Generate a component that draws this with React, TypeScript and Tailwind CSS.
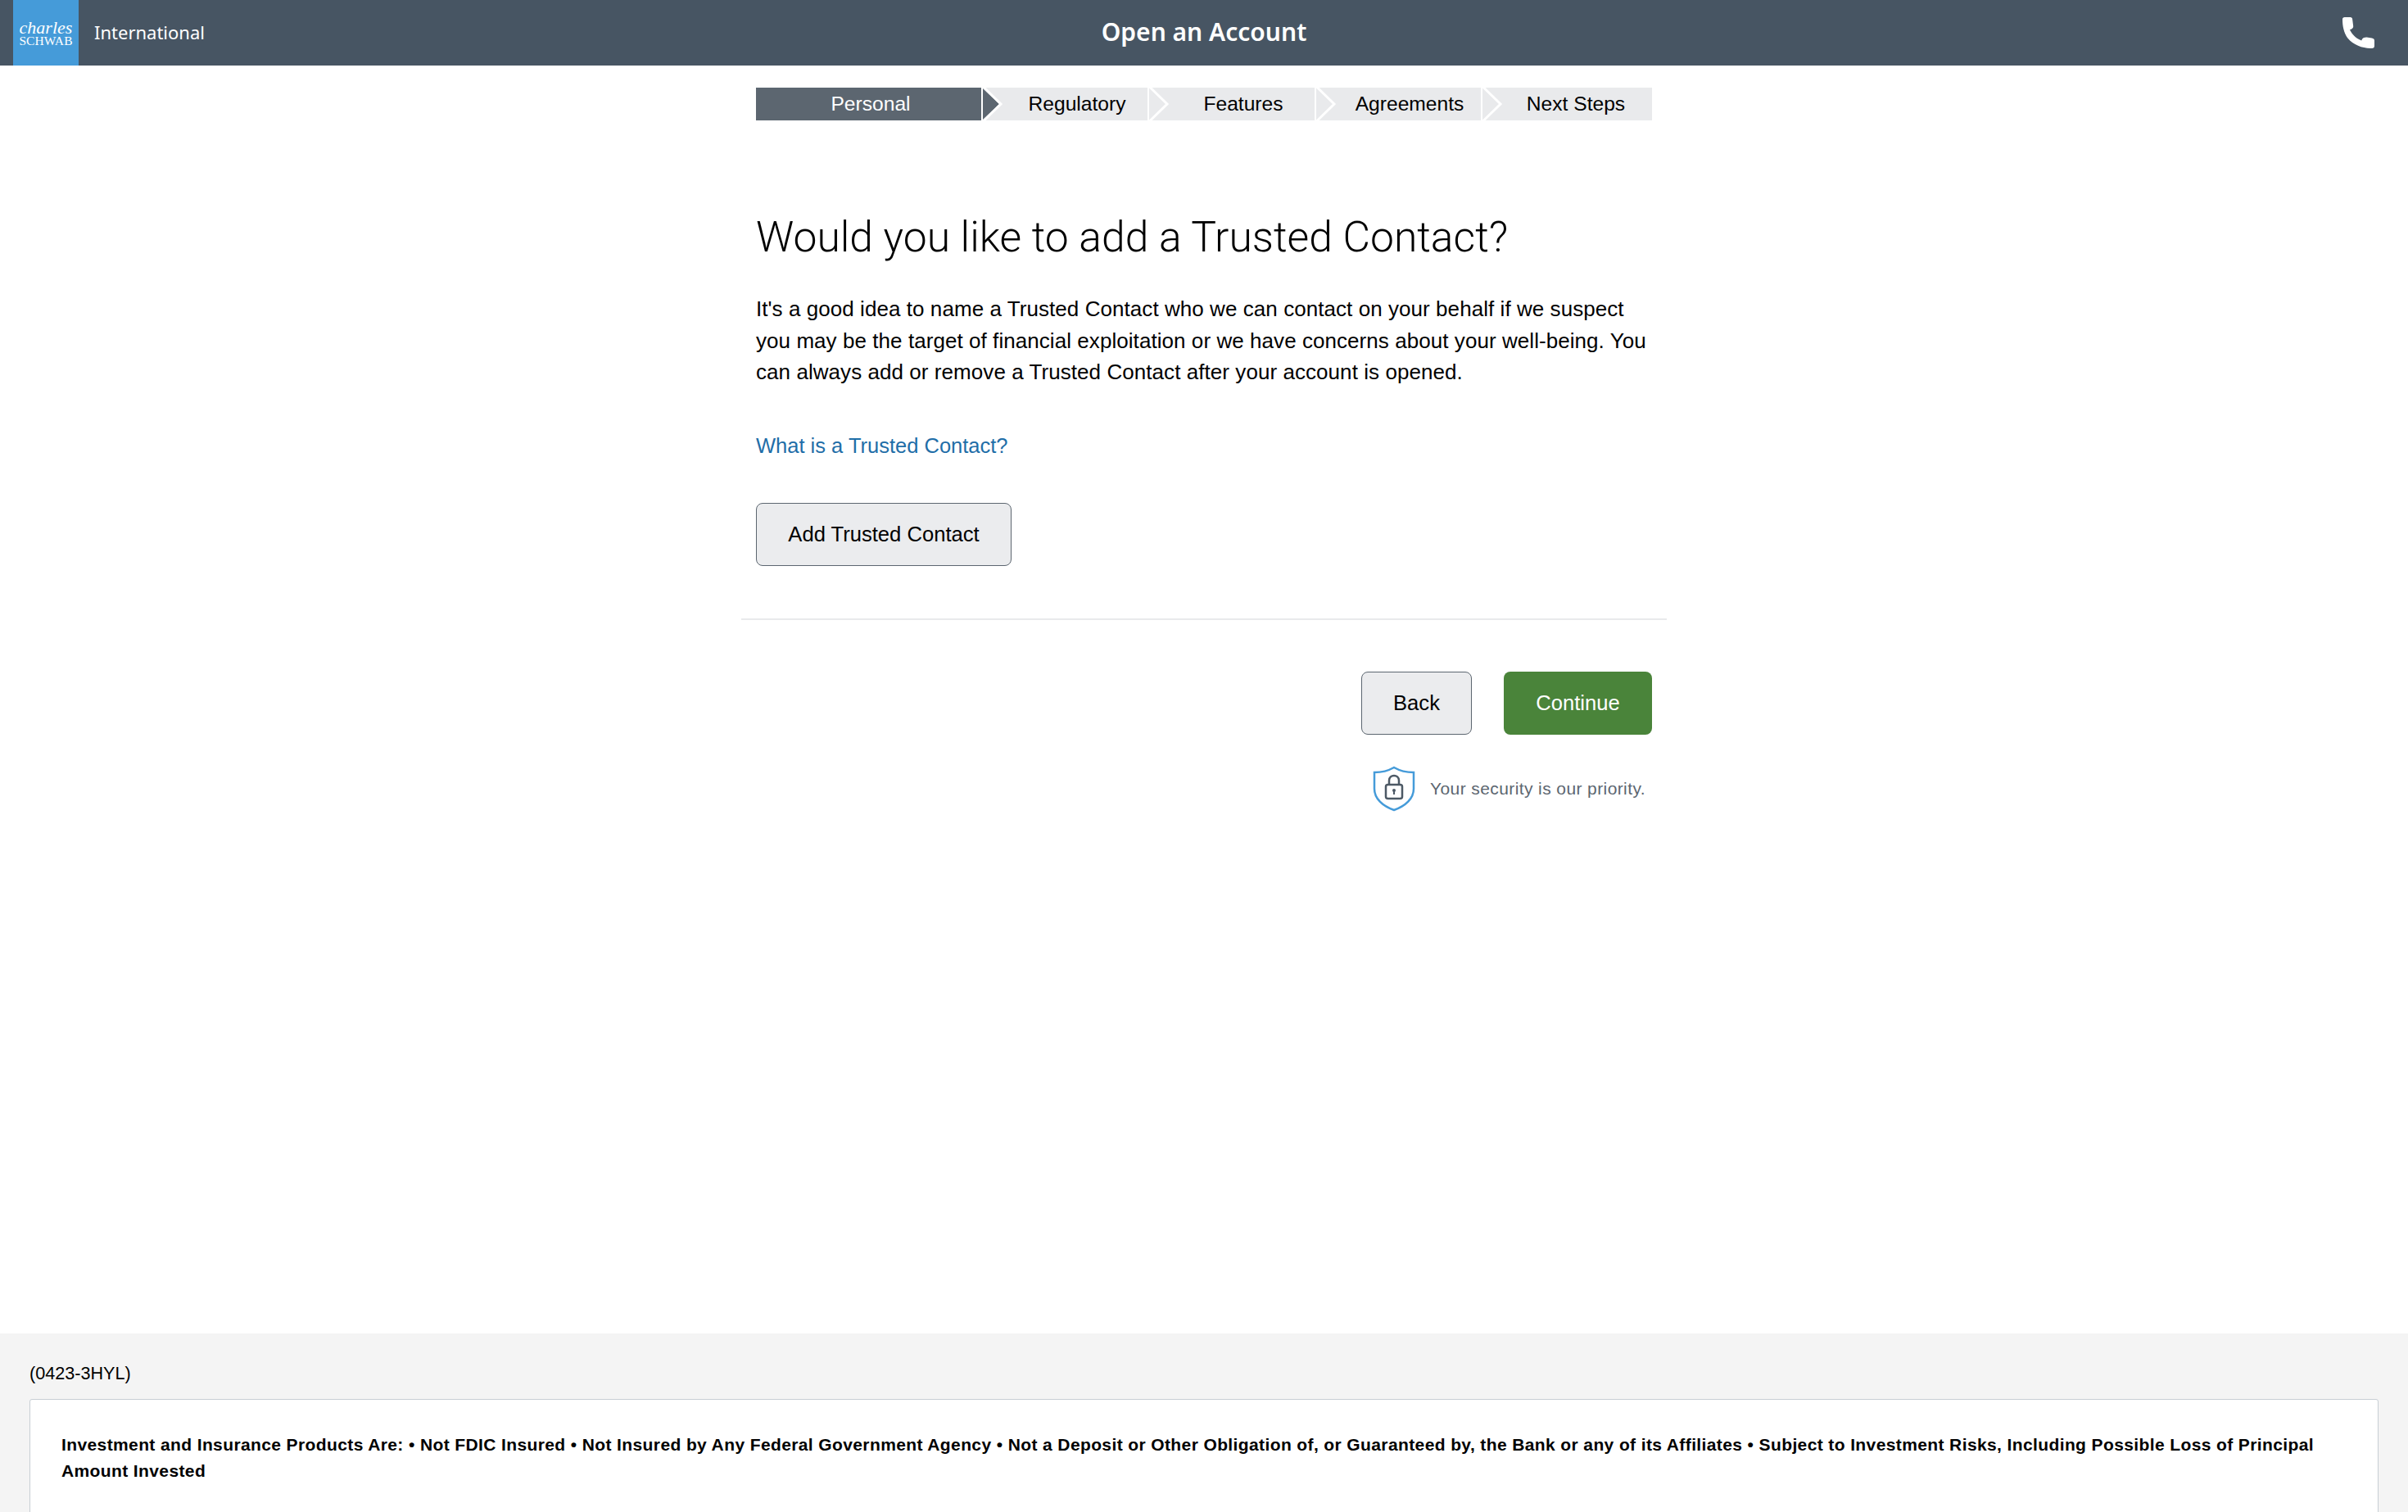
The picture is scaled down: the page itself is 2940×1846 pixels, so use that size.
import React from 'react';

const steps = [
    { label: 'Regulatory', width: 'w-[203px]', pad: 'pl-[31px]' },
    { label: 'Features', width: 'w-[204px]', pad: 'pl-[30px]' },
    { label: 'Agreements', width: 'w-[203px]', pad: 'pl-[29px]' },
    { label: 'Next Steps', width: 'w-[209px]', pad: 'pl-[23px]' },
];

const Chevron: React.FC<{ active?: boolean }> = ({ active }) => (
    <svg className="absolute left-0 top-0" width="30" height="40" viewBox="0 0 30 40" fill="none">
        <rect x="0" y="0" width="2" height="40" fill="#ffffff" />
        {active && <path d="M2 1 L22 20 L2 39 Z" fill="#5c6670" />}
        <path d="M2 -1.5 L24 20 L2 41.5" stroke="#ffffff" strokeWidth="3" />
    </svg>
);

const Btn: React.FC<{ children: React.ReactNode; className: string }> = ({ children, className }) => (
    <button className={`h-[77px] rounded-[8px] text-[25.6px] ${className}`}>{children}</button>
);

export default function App() {
    return (
        <div className="h-[1846px] w-[2940px] overflow-hidden bg-white flex flex-col font-['Liberation_Sans',sans-serif] text-black">
            <header className="relative h-[80px] shrink-0 bg-[#475563] flex items-center pl-[16px] pr-[41px] text-white">
                <div className="w-[80px] h-[80px] bg-[#459bd9] flex flex-col items-center justify-center font-['Liberation_Serif',serif] leading-none">
                    <span className="italic text-[22px] leading-[19px]">charles</span>
                    <span className="text-[15.5px] leading-[13px] tracking-[0.1px]">SCHWAB</span>
                </div>
                <span className="ml-[19px] -mt-[2px] text-[22px] font-['Noto_Sans',sans-serif]">International</span>
                <span className="absolute left-0 right-0 -top-px h-[80px] leading-[80px] text-center text-[30px] font-semibold font-['Noto_Sans',sans-serif]">Open an Account</span>
                <svg className="ml-auto" width="39" height="38" viewBox="2 0 37 38.6" preserveAspectRatio="none" fill="#ffffff">
                    <path d="M2 2.5 C2 1 3 0 4.5 0 L11 0 C12.5 0 13.5 1 13.5 2.5 L14.5 11 C14.8 13.5 13 15 10.5 15.5 C13 21 17 26 24 29 C25 26 27 25 30 25 L36 26 C38 26.5 39 27.5 39 29 L39 35.5 C39 37.5 38 38.5 36 38.5 C26 39 15 35 8 26 C3.5 19 2 11 2 2.5 Z" />
                </svg>
            </header>

            <main className="flex-1 flex flex-col w-[1130px] mx-auto">
                <div className="px-[18px]">
                    <div className="mt-[27px] flex h-[40px] text-[24.6px] leading-[40px]">
                        <div className="w-[275px] bg-[#5c6670] text-white text-center pl-[5px]">Personal</div>
                        {steps.map((s, i) => (
                            <div key={s.label} className={`relative bg-[#e9eaec] text-center ${s.width} ${s.pad}`}>
                                <Chevron active={i === 0} />
                                {s.label}
                            </div>
                        ))}
                    </div>

                    <h1 className="mt-[111px] text-[51.6px] leading-[64px] font-light font-['Roboto',sans-serif]">
                        Would you like to add a Trusted Contact?
                    </h1>
                    <p className="mt-[36px] text-[26px] leading-[38.5px] tracking-[0.06px]">
                        It's a good idea to name a Trusted Contact who we can contact on your behalf if we suspect you may be the target of financial exploitation or we have concerns about your well-being. You can always add or remove a Trusted Contact after your account is opened.
                    </p>
                    <a className="block mt-[51px] text-[25.5px] leading-[38px] text-[#1f6ea8]">What is a Trusted Contact?</a>
                    <Btn className="mt-[51px] w-[312px] border border-[#5c6670] bg-[#ebecee]">Add Trusted Contact</Btn>
                </div>

                <div className="mt-[64px] border-t-2 border-[#e9eaec]" />

                <div className="px-[18px] flex flex-col items-end">
                    <div className="mt-[63px] flex gap-[39px]">
                        <Btn className="w-[135px] border border-[#5c6670] bg-[#ebecee]">Back</Btn>
                        <Btn className="w-[181px] bg-[#4a843a] text-white">Continue</Btn>
                    </div>
                    <div className="mt-[38px] flex items-center self-end pr-[8px]">
                        <svg width="52" height="56" viewBox="0 0 52 56" fill="none">
                            <path d="M26 2 C33 6 41 8 50 8 L50 28 C50 40 40 49 26 54 C12 49 2 40 2 28 L2 8 C11 8 19 6 26 2 Z" stroke="#459bd9" strokeWidth="2.5" />
                            <rect x="16" y="23" width="20" height="17" rx="2.5" stroke="#4d5965" strokeWidth="2.5" />
                            <path d="M20 23 L20 18 C20 10 32 10 32 18 L32 23" stroke="#4d5965" strokeWidth="2.5" />
                            <circle cx="26" cy="30" r="2" fill="#4d5965" />
                            <rect x="25" y="30" width="2" height="5" fill="#4d5965" />
                        </svg>
                        <span className="ml-[18px] text-[21px] text-[#5c6670] tracking-[0.4px]">Your security is our priority.</span>
                    </div>
                </div>
            </main>

            <footer className="h-[218px] shrink-0 bg-[#f4f4f4] px-[36px] pt-[35px] overflow-hidden">
                <div className="text-[21.6px] leading-[28px]">(0423-3HYL)</div>
                <div className="mt-[17px] h-[200px] bg-white border border-[#c8ced4] rounded-[3px] px-[38px] pt-[39px] text-[21px] leading-[32px] font-bold tracking-[0.387px]">
                    Investment and Insurance Products Are: • Not FDIC Insured • Not Insured by Any Federal Government Agency • Not a Deposit or Other Obligation of, or Guaranteed by, the Bank or any of its Affiliates • Subject to Investment Risks, Including Possible Loss of Principal Amount Invested
                </div>
            </footer>
        </div>
    );
}
